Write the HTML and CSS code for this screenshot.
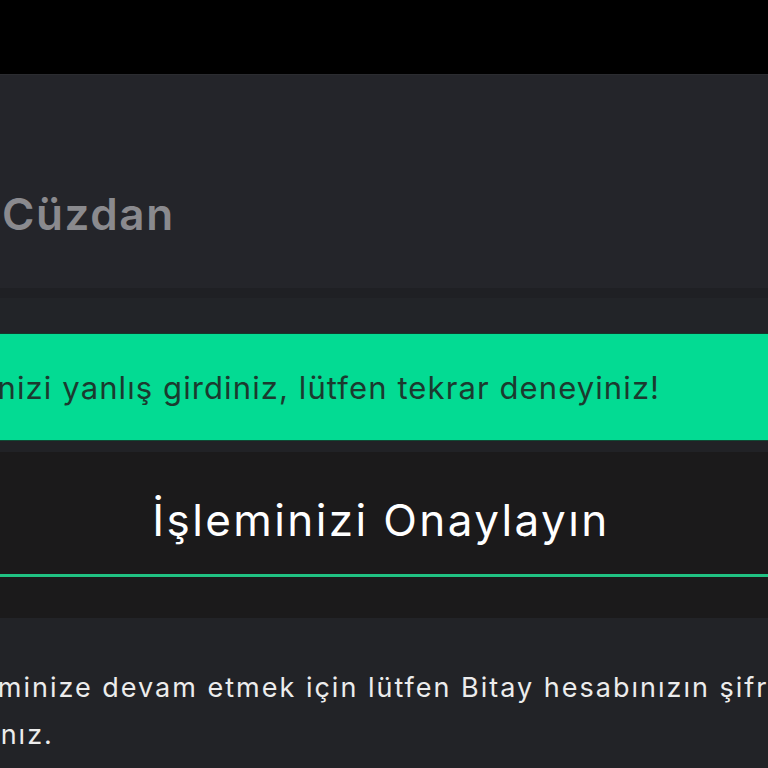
FILE: index.html
```html
<!DOCTYPE html>
<html lang="tr">
<head>
  <meta charset="UTF-8" />
  <meta name="viewport" content="width=device-width, initial-scale=1" />
  <title>Bitay Cüzdan</title>
  <link rel="stylesheet" href="styles.css">
</head>
<body>
  <div class="status-bar"></div>

  <div class="header">
    <h1 class="title">Cüzdan</h1>
  </div>
  <div class="divider"></div>

  <div class="alert">
    <p class="alert-text">Şifrenizi yanlış girdiniz, lütfen tekrar deneyiniz!</p>
  </div>
  <div class="spacer"></div>

  <div class="confirm-card">
    <div class="confirm-head">İşleminizi Onaylayın</div>
  </div>

  <div class="content">
    <p class="info">İşleminize devam etmek için lütfen Bitay hesabınızın şifresini<br>yazınız.</p>
  </div>
</body>
</html>
```

FILE: styles.css
```css
body {
  margin: 0;
  background-color: #222327;
  font-family: 'Inter', 'Noto Sans', sans-serif;
  overflow: hidden;
}

.status-bar {
  height: 74px;
  background-color: #000000;
}

.header {
  height: 214px;
  box-sizing: border-box;
  padding-top: 117px;
  padding-left: 2px;
  background-color: #24252a;
  border-top: 1px solid #2b2c30;
}

.title {
  margin: 0;
  font-size: 44px;
  line-height: 1;
  font-weight: 600;
  letter-spacing: 1.6px;
  color: #8a8a8e;
}

.divider {
  height: 46px;
  box-sizing: border-box;
  background-color: #222428;
  border-top: 10px solid #1f2024;
  border-bottom: 1px solid #123a2c;
}

.alert {
  height: 106px;
  display: flex;
  align-items: center;
  background-color: #03db93;
}

.alert-text {
  margin: 0 0 0 -76px;
  white-space: nowrap;
  font-size: 31px;
  line-height: 1;
  letter-spacing: 1.1px;
  color: #1b3a2f;
}

.spacer {
  height: 11px;
  background-color: #212226;
  border-top: 1px solid #0f4a34;
}

.confirm-card {
  background-color: #1b1a1b;
  padding-bottom: 41px;
}

.confirm-head {
  height: 125px;
  box-sizing: border-box;
  padding-top: 14px;
  padding-right: 6px;
  display: flex;
  align-items: center;
  justify-content: center;
  border-bottom: 3px solid #20c283;
  font-size: 44px;
  line-height: 1;
  letter-spacing: 2.4px;
  color: #ffffff;
}

.content {
  padding-top: 46px;
}

/* first line and second line are cut at different points of the screen edge */
.info {
  margin: 0 0 0 -59px;
  text-indent: 5px;
  white-space: nowrap;
  font-size: 27px;
  line-height: 47px;
  letter-spacing: 2px;
  color: #ececec;
}
```
